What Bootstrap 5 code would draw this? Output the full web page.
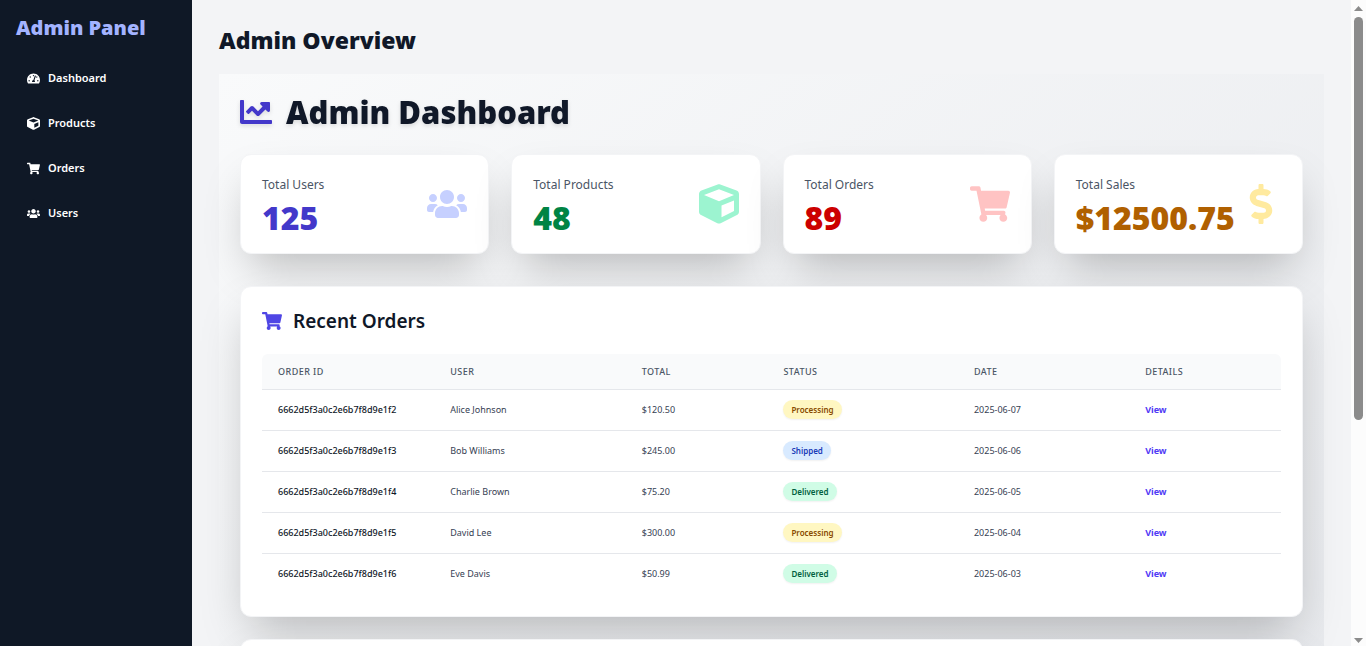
<!DOCTYPE html>
<html lang="en">
<head>
<meta charset="utf-8">
<meta name="viewport" content="width=device-width, initial-scale=1">
<title>Admin Panel</title>
<link rel="stylesheet" href="https://cdn.jsdelivr.net/npm/bootstrap@5.3.0/dist/css/bootstrap.min.css">
<style>
body{font-family:"Noto Sans","Open Sans",sans-serif;background:#f3f4f6;color:#101828;font-size:12px;line-height:18px}
.ico{width:1em;height:1em;fill:currentColor;flex:none}
.sidebar{width:192px;background:#0f1826;padding:14px 16px}
.brand{color:#a3b3ff;font-size:20px;line-height:28px;font-weight:900}
.side-nav{gap:9px;margin-top:-6px}
.side-link{color:#fff;font-weight:600;font-size:11px;padding:9px 11px;line-height:18px}
.side-link .ico{font-size:13px}
.content{padding:27px;scrollbar-width:none}
.content::-webkit-scrollbar{display:none}
.page-title{font-size:23px;line-height:26px;font-weight:900;margin:0 0 21px}
.panel{background:linear-gradient(to bottom right,#f9fafb,#e5e7eb);padding:21px}
.panel-title{font-size:31px;line-height:34px;font-weight:900;gap:14px;margin:0 0 25px;filter:drop-shadow(0 2px 2px rgba(0,0,0,.12))}
.panel-title .ico{font-size:32px}
.stats{display:grid;grid-template-columns:repeat(4,minmax(0,1fr));gap:22px}
.tile{background:#fff;border:1px solid #f3f4f6;border-radius:11px;padding:21px;box-shadow:0 22px 45px -11px rgba(0,0,0,.25)}
.tile-label{color:#4a5565;font-size:12px;line-height:18px}
.tile-value{font-size:32px;line-height:28px;font-weight:900;margin-top:10px}
.stat-ico{font-size:40px}
.c-indigo{color:#4338ca}.c-green{color:#008444}.c-red{color:#cc0000}.c-amber{color:#b06000}
.p-indigo{color:#c6d0ff}.p-green{color:#9cf4d0}.p-red{color:#ffc3c3}.p-amber{color:#ffea9f}
.recent{margin-top:32px}
.more{margin-top:22px;height:250px}
.recent-title{font-size:19px;line-height:26px;font-weight:600;gap:11px;margin:0 0 20px}
.recent-title .ico{color:#4f46e5;font-size:20px}
.orders{width:100%;table-layout:fixed;font-size:9px;line-height:13px}
.orders th{font-weight:500;color:#4a5565;letter-spacing:.05em;text-transform:uppercase;padding:11px 16px;background:#f9fafb;height:35px}
.orders th:first-child{border-radius:6px 0 0 0}
.orders th:last-child{border-radius:0 6px 0 0}
.orders td{padding:9px 16px 11px;height:41px;vertical-align:middle;color:#364153;border-top:1px solid #e5e7eb}
.orders td:first-child{font-weight:500;color:#101828}
.orders a{color:#4f39f6;font-weight:700;text-decoration:none}
.pill{display:inline-block;vertical-align:middle;border-radius:10px;padding:3px 8px;font-size:8px;line-height:13px;font-weight:600;box-shadow:0 1px 2px rgba(0,0,0,.06)}
.pill-processing{background:#fff7c2;color:#894b00}
.pill-shipped{background:#d8eaff;color:#193cb8}
.pill-delivered{background:#d0fce6;color:#016040}
.rail{width:15px;background:#fcfcfc;padding:6px 0 3px}
.rail svg{width:9px;height:5px;fill:#8b8b8b}
.rail-track{padding:6px 0}
.thumb{width:9px;height:65.5%;border-radius:5px;background:#8b8b8b}
</style>
<script src="https://cdn.jsdelivr.net/npm/bootstrap@5.3.0/dist/js/bootstrap.bundle.min.js"></script>
</head>
<body>
<svg class="d-none" aria-hidden="true">
<symbol id="gauge" viewBox="0 0 576 512"><path d="M288 32C128.94 32 0 160.94 0 320c0 52.8 14.25 102.26 39.06 144.8 5.61 9.62 16.3 15.2 27.44 15.2h443c11.14 0 21.83-5.58 27.44-15.2C561.75 422.26 576 372.8 576 320c0-159.06-128.94-288-288-288zm0 64c14.71 0 26.58 10.13 30.32 23.65-1.11 2.26-2.64 4.23-3.45 6.67l-9.22 27.67c-5.13 3.49-10.97 6.01-17.64 6.01-17.67 0-32-14.33-32-32S270.33 96 288 96zM96 384c-17.67 0-32-14.33-32-32s14.33-32 32-32 32 14.33 32 32-14.33 32-32 32zm48-160c-17.67 0-32-14.33-32-32s14.33-32 32-32 32 14.33 32 32-14.33 32-32 32zm246.77-72.41l-61.33 184C343.13 347.33 352 364.54 352 384c0 11.72-3.38 22.55-8.88 32H232.88c-5.5-9.45-8.88-20.28-8.88-32 0-33.94 26.5-61.43 59.9-63.59l61.34-184.01c4.17-12.56 17.73-19.45 30.36-15.17 12.57 4.19 19.35 17.79 15.17 30.36zm14.66 57.2l15.52-46.55c3.47-1.29 7.13-2.23 11.05-2.23 17.67 0 32 14.33 32 32s-14.33 32-32 32c-11.38-.01-20.89-6.28-26.57-15.22zM480 384c-17.67 0-32-14.33-32-32s14.33-32 32-32 32 14.33 32 32-14.33 32-32 32z"/></symbol>
<symbol id="cube" viewBox="0 0 512 512"><path d="M239.1 6.3l-208 78c-18.7 7-31.1 25-31.1 45v225.1c0 18.2 10.3 34.8 26.5 42.9l208 104c13.5 6.8 29.4 6.8 42.9 0l208-104c16.3-8.1 26.5-24.8 26.5-42.9V129.3c0-20-12.4-37.9-31.1-44.9l-208-78C262 2.2 250 2.2 239.1 6.3zM256 68.4l192 72v1.1l-192 78-192-78v-1.1l192-72zm32 356V275.5l160-65v133.9l-160 80z"/></symbol>
<symbol id="cart" viewBox="0 0 576 512"><path d="M528.12 301.319l47.273-208C578.806 78.301 567.391 64 551.99 64H159.208l-9.166-44.81C147.758 8.021 137.93 0 126.529 0H24C10.745 0 0 10.745 0 24v16c0 13.255 10.745 24 24 24h69.883l70.248 343.435C147.325 417.1 136 435.222 136 456c0 30.928 25.072 56 56 56s56-25.072 56-56c0-15.674-6.447-29.835-16.824-40h209.647C430.447 426.165 424 440.326 424 456c0 30.928 25.072 56 56 56s56-25.072 56-56c0-22.172-12.888-41.332-31.579-50.405l5.517-24.276c3.413-15.018-8.002-29.319-23.403-29.319H218.117l-6.545-32h293.145c11.206 0 20.92-7.754 23.403-18.681z"/></symbol>
<symbol id="people" viewBox="0 0 640 512"><path d="M96 224c35.3 0 64-28.7 64-64s-28.7-64-64-64-64 28.7-64 64 28.7 64 64 64zm448 0c35.3 0 64-28.7 64-64s-28.7-64-64-64-64 28.7-64 64 28.7 64 64 64zm32 32h-64c-17.6 0-33.5 7.1-45.1 18.6 40.3 22.1 68.9 62 75.1 109.4h66c17.7 0 32-14.3 32-32v-32c0-35.3-28.7-64-64-64zm-256 0c61.9 0 112-50.1 112-112S381.9 32 320 32 208 82.1 208 144s50.1 112 112 112zm76.8 32h-8.3c-20.8 10-43.9 16-68.5 16s-47.6-6-68.5-16h-8.3C179.6 288 128 339.6 128 403.2V432c0 26.5 21.5 48 48 48h288c26.5 0 48-21.5 48-48v-28.8c0-63.6-51.6-115.2-115.2-115.2zm-223.7-13.4C161.5 263.1 145.6 256 128 256H64c-35.3 0-64 28.7-64 64v32c0 17.7 14.3 32 32 32h65.9c6.3-47.4 34.9-87.3 75.2-109.4z"/></symbol>
<symbol id="chart" viewBox="0 0 512 512"><path d="M496 384H64V80c0-8.84-7.16-16-16-16H16C7.16 64 0 71.16 0 80v336c0 17.67 14.33 32 32 32h464c8.84 0 16-7.16 16-16v-32c0-8.84-7.16-16-16-16zM464 96H345.94c-21.38 0-32.09 25.85-16.97 40.97l32.4 32.4L288 242.75l-73.37-73.37c-12.5-12.5-32.76-12.5-45.25 0l-68.69 68.69c-6.25 6.25-6.25 16.38 0 22.63l22.62 22.62c6.25 6.25 16.38 6.25 22.63 0L192 237.25l73.37 73.37c12.5 12.5 32.76 12.5 45.25 0l96-96 32.4 32.4c15.12 15.12 40.97 4.41 40.97-16.97V112c.01-8.84-7.15-16-15.99-16z"/></symbol>
<symbol id="dollar" viewBox="0 0 288 512"><path d="M209.2 233.4l-108-31.6C88.7 198.2 80 186.5 80 173.5c0-16.3 13.2-29.5 29.5-29.5h66.3c12.2 0 24.2 3.7 34.2 10.5 6.1 4.1 14.3 3.1 19.5-2l34.8-34c7.1-6.9 6.1-18.4-1.8-24.5C238 74.8 207.4 64.1 176 64V16c0-8.8-7.2-16-16-16h-32c-8.8 0-16 7.2-16 16v48h-2.5C45.8 64-5.4 118.7.5 183.6c4.2 46.1 39.4 83.6 83.8 96.6l102.5 30c12.5 3.7 21.2 15.3 21.2 28.3 0 16.3-13.2 29.5-29.5 29.5h-66.3C100 368 88 364.3 78 357.5c-6.1-4.1-14.3-3.1-19.5 2l-34.8 34c-7.1 6.9-6.1 18.4 1.8 24.5 24.5 19.2 55.1 29.9 86.5 30v48c0 8.8 7.2 16 16 16h32c8.8 0 16-7.2 16-16v-48.2c46.6-.9 90.3-28.6 105.7-72.7 21.5-61.6-14.6-124.8-72.5-141.7z"/></symbol>
</svg>
<div class="d-flex vh-100 overflow-hidden">
  <aside class="sidebar flex-shrink-0">
    <div class="brand mb-4">Admin Panel</div>
    <nav class="nav flex-column side-nav" aria-label="Admin">
      <a class="side-link nav-link d-flex align-items-center gap-2" href="#"><svg class="ico"><use href="#gauge"/></svg>Dashboard</a>
      <a class="side-link nav-link d-flex align-items-center gap-2" href="#"><svg class="ico"><use href="#cube"/></svg>Products</a>
      <a class="side-link nav-link d-flex align-items-center gap-2" href="#"><svg class="ico"><use href="#cart"/></svg>Orders</a>
      <a class="side-link nav-link d-flex align-items-center gap-2" href="#"><svg class="ico"><use href="#people"/></svg>Users</a>
    </nav>
  </aside>
  <main class="content flex-grow-1 overflow-auto">
    <h1 class="page-title">Admin Overview</h1>
    <section class="panel d-flex flex-column">
      <h2 class="panel-title d-flex align-items-center"><svg class="ico c-indigo"><use href="#chart"/></svg>Admin Dashboard</h2>
      <div class="stats">
        <div class="tile d-flex align-items-center justify-content-between">
          <div><div class="tile-label">Total Users</div><div class="tile-value c-indigo">125</div></div>
          <svg class="ico stat-ico p-indigo"><use href="#people"/></svg>
        </div>
        <div class="tile d-flex align-items-center justify-content-between">
          <div><div class="tile-label">Total Products</div><div class="tile-value c-green">48</div></div>
          <svg class="ico stat-ico p-green"><use href="#cube"/></svg>
        </div>
        <div class="tile d-flex align-items-center justify-content-between">
          <div><div class="tile-label">Total Orders</div><div class="tile-value c-red">89</div></div>
          <svg class="ico stat-ico p-red"><use href="#cart"/></svg>
        </div>
        <div class="tile d-flex align-items-center justify-content-between">
          <div><div class="tile-label">Total Sales</div><div class="tile-value c-amber">$12500.75</div></div>
          <svg class="ico stat-ico p-amber"><use href="#dollar"/></svg>
        </div>
      </div>
      <div class="tile recent">
        <h3 class="recent-title d-flex align-items-center"><svg class="ico"><use href="#cart"/></svg>Recent Orders</h3>
        <table class="orders">
          <colgroup><col style="width:16.9%"><col style="width:18.8%"><col style="width:13.9%"><col style="width:18.7%"><col style="width:16.8%"><col style="width:14.9%"></colgroup>
          <thead><tr><th>Order ID</th><th>User</th><th>Total</th><th>Status</th><th>Date</th><th>Details</th></tr></thead>
          <tbody>
            <tr><td>6662d5f3a0c2e6b7f8d9e1f2</td><td>Alice Johnson</td><td>$120.50</td><td><span class="pill pill-processing">Processing</span></td><td>2025-06-07</td><td><a href="#">View</a></td></tr>
            <tr><td>6662d5f3a0c2e6b7f8d9e1f3</td><td>Bob Williams</td><td>$245.00</td><td><span class="pill pill-shipped">Shipped</span></td><td>2025-06-06</td><td><a href="#">View</a></td></tr>
            <tr><td>6662d5f3a0c2e6b7f8d9e1f4</td><td>Charlie Brown</td><td>$75.20</td><td><span class="pill pill-delivered">Delivered</span></td><td>2025-06-05</td><td><a href="#">View</a></td></tr>
            <tr><td>6662d5f3a0c2e6b7f8d9e1f5</td><td>David Lee</td><td>$300.00</td><td><span class="pill pill-processing">Processing</span></td><td>2025-06-04</td><td><a href="#">View</a></td></tr>
            <tr><td>6662d5f3a0c2e6b7f8d9e1f6</td><td>Eve Davis</td><td>$50.99</td><td><span class="pill pill-delivered">Delivered</span></td><td>2025-06-03</td><td><a href="#">View</a></td></tr>
          </tbody>
        </table>
      </div>
      <div class="tile more"></div>
    </section>
  </main>
  <div class="rail d-flex flex-column align-items-center flex-shrink-0" aria-hidden="true">
    <svg viewBox="0 0 9 5"><path d="M4.500 0L9 5H0z"/></svg>
    <div class="rail-track flex-grow-1"><div class="thumb"></div></div>
    <svg viewBox="0 0 9 5"><path d="M0 0h9L4.500 5z"/></svg>
  </div>
</div>
</body>
</html>
